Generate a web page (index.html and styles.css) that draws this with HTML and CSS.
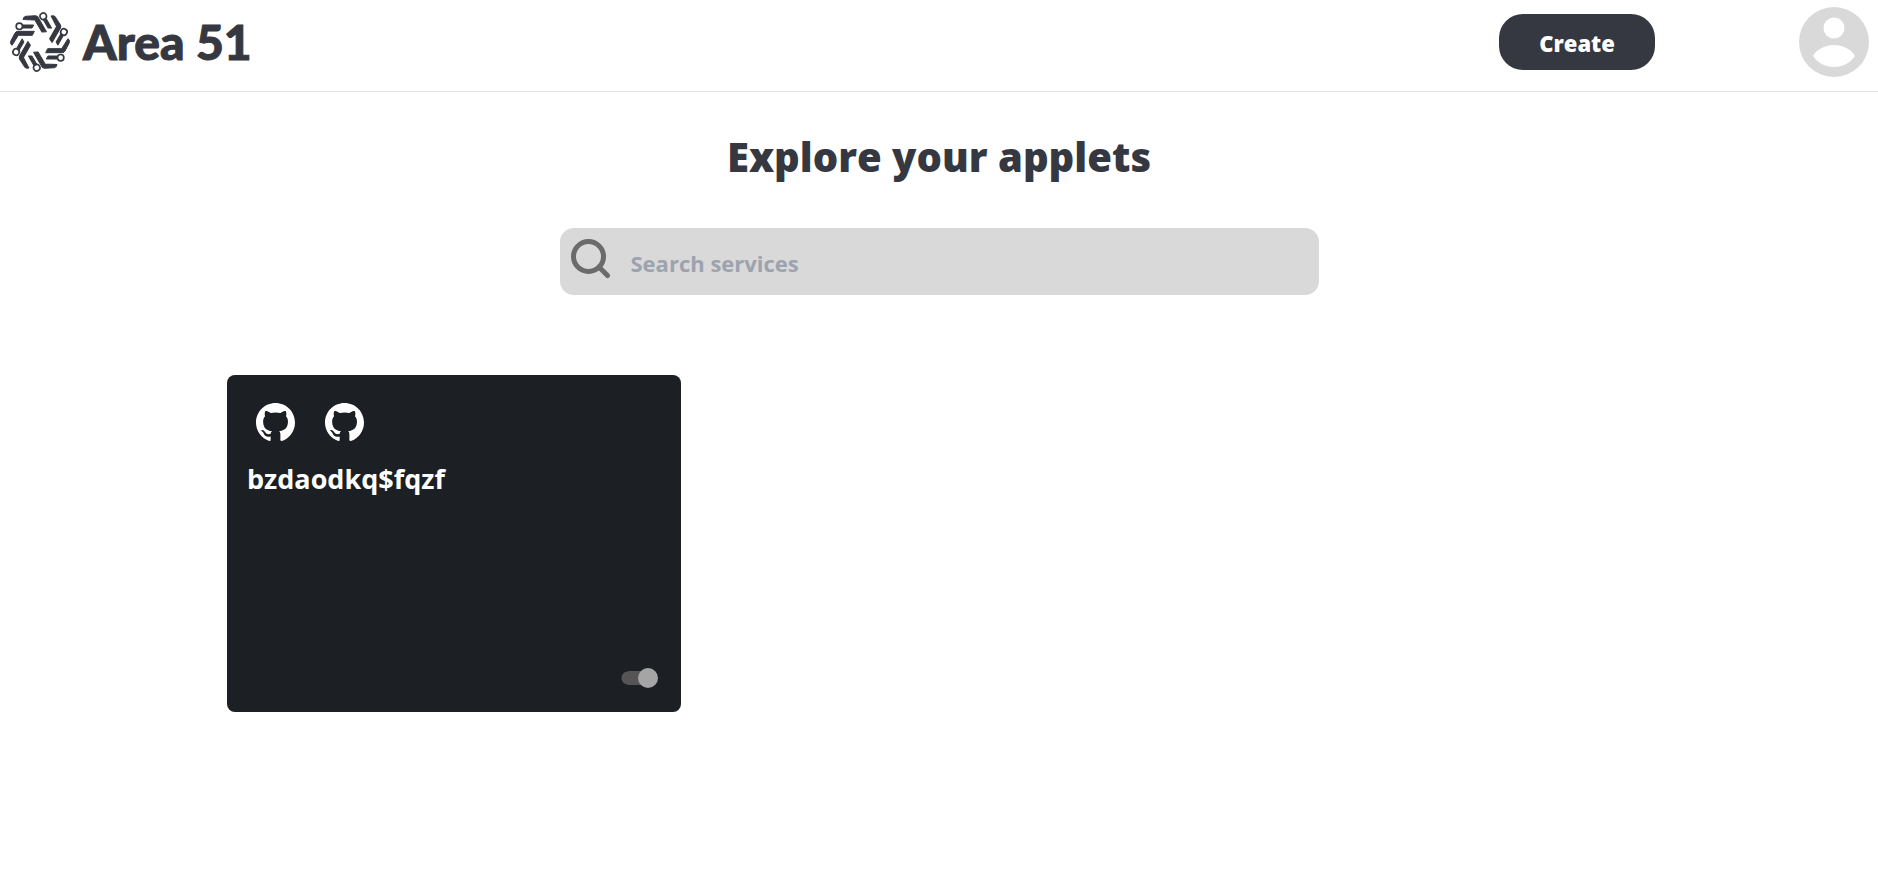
FILE: index.html
```html
<!DOCTYPE html>
<html lang="en">
<head>
<meta charset="utf-8">
<title>Area 51</title>
<link rel="stylesheet" href="styles.css">
</head>
<body>
<svg class="defs" aria-hidden="true">
  <defs>
    <g id="logo-arm" stroke="currentColor" stroke-linejoin="round">
      <circle cx="58" cy="79" r="9.500" fill="none" stroke-width="5"/>
      <path stroke-width="3" d="M69 75H101L96 84H67Z"/>
      <path stroke-width="3" d="M32 124L45 99Q48 94 53 94H103L97 106H55L36 136L32 131Z"/>
    </g>
    <symbol id="github" viewBox="0 0 16 16">
      <path d="M8 0C3.58 0 0 3.58 0 8c0 3.54 2.29 6.53 5.47 7.59.4.07.55-.17.55-.38 0-.19-.01-.82-.01-1.49-2.01.37-2.53-.49-2.69-.94-.09-.23-.48-.94-.82-1.13-.28-.15-.68-.52-.01-.53.63-.01 1.08.58 1.23.82.72 1.21 1.87.87 2.33.66.07-.52.28-.87.51-1.07-1.78-.2-3.64-.89-3.64-3.95 0-.87.31-1.59.82-2.15-.08-.2-.36-1.02.08-2.12 0 0 .67-.21 2.2.82.64-.18 1.32-.27 2-.27s1.36.09 2 .27c1.53-1.04 2.2-.82 2.2-.82.44 1.1.16 1.92.08 2.12.51.56.82 1.27.82 2.15 0 3.07-1.87 3.75-3.65 3.95.29.25.54.73.54 1.48 0 1.07-.01 1.93-.01 2.2 0 .21.15.46.55.38A8.01 8.01 0 0 0 16 8c0-4.42-3.58-8-8-8z"/>
    </symbol>
  </defs>
</svg>
<header class="header">
  <a class="brand" href="#">
    <svg class="brand-mark" viewBox="27 33 186 186" fill="currentColor" aria-hidden="true">
      <use href="#logo-arm"/>
      <use href="#logo-arm" transform="rotate(60 120 126)"/>
      <use href="#logo-arm" transform="rotate(120 120 126)"/>
      <use href="#logo-arm" transform="rotate(180 120 126)"/>
      <use href="#logo-arm" transform="rotate(240 120 126)"/>
      <use href="#logo-arm" transform="rotate(300 120 126)"/>
    </svg>
    <span class="brand-name">Area 51</span>
  </a>
  <div class="actions">
    <button class="create" type="button">Create</button>
    <button class="avatar" type="button" aria-label="Profile">
      <svg viewBox="0 0 70 70" aria-hidden="true">
        <circle cx="35" cy="35" r="35" fill="#d9d9d9"/>
        <circle cx="35" cy="21" r="10.5" fill="#fff"/>
        <path d="M14 49C18 42 26 38 35 38S52 42 56 49C51 56 44 60 35 60S19 56 14 49Z" fill="#fff"/>
      </svg>
    </button>
  </div>
</header>
<main class="main">
  <h1 class="title">Explore your applets</h1>
  <label class="search">
    <svg class="search-icon" viewBox="0 0 40 40" fill="none" stroke="#6b6b6b" stroke-width="5" stroke-linecap="round" aria-hidden="true">
      <circle cx="17.5" cy="17.5" r="15"/>
      <path d="M28 28L36.5 36.5"/>
    </svg>
    <input class="search-input" type="text" placeholder="Search services" aria-label="Search services">
  </label>
  <section class="grid">
    <article class="card">
      <div class="services">
        <svg class="service" role="img" aria-label="GitHub"><use href="#github"/></svg>
        <svg class="service" role="img" aria-label="GitHub"><use href="#github"/></svg>
      </div>
      <h2 class="card-title">bzdaodkq$fqzf</h2>
      <input class="switch" type="checkbox" role="switch" aria-label="Enable applet" checked>
    </article>
  </section>
</main>
</body>
</html>
```
FILE: styles.css
```css
* { box-sizing: border-box; }
body {
  margin: 0;
  background: #fff;
  color: #363841;
  font-family: "Open Sans", "Noto Sans", sans-serif;
}
.defs { position: absolute; width: 0; height: 0; }
.header {
  display: flex;
  justify-content: space-between;
  align-items: flex-start;
  height: 92px;
  padding: 7px 9px 0;
  border-bottom: 1px solid #e0e0e0;
}
.brand {
  display: flex;
  align-items: center;
  gap: 12px;
  height: 70px;
  color: inherit;
  text-decoration: none;
}
.brand-mark { width: 62px; height: 62px; }
.brand-name {
  font-family: Lato, sans-serif;
  font-size: 48px;
  font-weight: 900;
  line-height: 70px;
  -webkit-text-stroke: 1px currentColor;
}
.actions { display: flex; align-items: center; gap: 144px; }
.create {
  width: 156px;
  height: 56px;
  padding: 2px 0 0;
  border: 0;
  border-radius: 24px;
  background: #363841;
  color: #fff;
  font-family: inherit;
  font-size: 22px;
  font-weight: 800;
}
.avatar {
  width: 70px;
  height: 70px;
  padding: 0;
  border: 0;
  background: none;
}
.avatar svg { display: block; }
.main {
  display: flex;
  flex-direction: column;
  align-items: center;
  padding: 35px 24px;
}
.title {
  margin: 0 0 41px;
  font-size: 40px;
  font-weight: 800;
  line-height: 60px;
}
.search {
  display: flex;
  align-items: center;
  gap: 20px;
  width: 100%;
  max-width: 759px;
  height: 67px;
  padding: 0 11px;
  border-radius: 14px;
  background: #d9d9d9;
}
.search-icon { flex: none; width: 40px; height: 40px; margin-bottom: 5px; }
.search-input {
  flex: 1;
  min-width: 0;
  padding: 2px 0 0;
  border: 0;
  outline: 0;
  background: none;
  color: #363841;
  font-family: inherit;
  font-size: 22px;
  font-weight: 700;
}
.search-input::placeholder { color: #9ca3af; opacity: 1; }
.grid {
  display: grid;
  grid-template-columns: repeat(3, 1fr);
  gap: 31px;
  width: 100%;
  max-width: 1424px;
  margin-top: 80px;
}
.card {
  display: flex;
  flex-direction: column;
  min-height: 337px;
  padding: 28px 20px 24px;
  border-radius: 8px;
  background: #1c1f24;
  color: #fff;
}
.services { display: flex; gap: 30px; padding: 0 9px; }
.service { width: 39px; height: 39px; fill: currentColor; }
.card-title {
  margin: 17px 0 0;
  font-size: 27px;
  font-weight: 700;
  line-height: 40px;
}
.switch {
  display: flex;
  align-items: center;
  justify-content: flex-end;
  appearance: none;
  width: 37px;
  height: 20px;
  margin: auto 3px 0 auto;
  background:
    radial-gradient(circle, #555 6px, transparent 7px) left center / 14px 14px no-repeat,
    linear-gradient(#555, #555) 7px center / 16px 14px no-repeat;
}
.switch::before {
  content: "";
  width: 20px;
  height: 20px;
  border-radius: 50%;
  background: #a5a5a5;
}
.switch:not(:checked) { justify-content: flex-start; }
```
